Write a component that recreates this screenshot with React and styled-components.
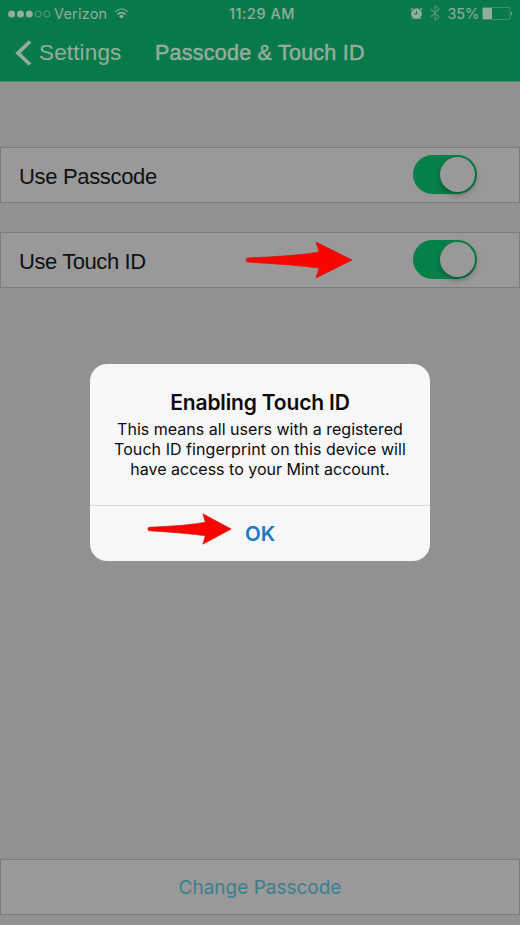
import React from "react";
import styled, { createGlobalStyle } from "styled-components";

const GlobalStyle = createGlobalStyle`
  *, *::before, *::after { box-sizing: border-box; }
  html, body { margin: 0; padding: 0; background: #929292; }
`;

const Screen = styled.main`
  position: relative;
  display: flex;
  flex-direction: column;
  width: 520px;
  height: 925px;
  overflow: hidden;
  background: #929292;
  font-family: "Inter", sans-serif;
`;

const Header = styled.header`
  height: 82px;
  background: #087a4a;
  color: #94ad9f;
  border-bottom: 1px solid #4d8a6d;
`;

const StatusBar = styled.div`
  display: grid;
  grid-template-columns: 1fr auto 1fr;
  align-items: center;
  height: 27px;
  padding: 0 7px 0 8px;
  font-size: 14.5px;
`;

const StatusGroup = styled.div`
  display: flex;
  align-items: center;
  justify-content: ${(p) => (p.$end ? "flex-end" : "flex-start")};
`;

const StatusText = styled.span`
  font-weight: ${(p) => p.$weight || 400};
  letter-spacing: ${(p) => p.$spacing || "0"};
  margin: ${(p) => p.$margin || "0"};
  line-height: 20px;
  white-space: nowrap;
`;

const Icon = styled.svg`
  display: block;
  flex: none;
  margin: ${(p) => p.$margin || "0"};
`;

const NavBar = styled.nav`
  display: flex;
  align-items: center;
  height: 52px;
  padding-left: 15px;
  font-family: "Liberation Sans", Arial, sans-serif;
  font-size: 22px;
`;

const BackButton = styled.button`
  display: flex;
  align-items: center;
  gap: 7px;
  width: 140px;
  padding: 0;
  border: 0;
  background: none;
  color: inherit;
  font: inherit;
  font-size: 22.5px;
  line-height: 28px;
  letter-spacing: 0.15px;
`;

const NavTitle = styled.h1`
  margin: 0;
  font-size: 21.5px;
  font-weight: 400;
  line-height: 28px;
  letter-spacing: 0.24px;
  white-space: nowrap;
  -webkit-text-stroke: 0.5px currentColor;
`;

const Content = styled.section`
  display: flex;
  flex: 1;
  flex-direction: column;
  gap: 29px;
  padding: 65px 0 10px;
`;

const Row = styled.div`
  display: flex;
  align-items: center;
  justify-content: space-between;
  height: 56px;
  flex: none;
  padding: 0 42px 0 18px;
  border: 1px solid #7b7b7b;
  background: #999;
  color: #101010;
  font-family: "Liberation Sans", Arial, sans-serif;
  font-size: 22px;
`;

const RowLabel = styled.span`
  line-height: 28px;
  padding-top: 4px;
  letter-spacing: ${(p) => p.$spacing || "0"};
`;

const Toggle = styled.span`
  display: flex;
  justify-content: flex-end;
  width: 64px;
  height: 39px;
  padding: 2px;
  margin-bottom: 1px;
  border-radius: 20px;
  background: #068049;
`;

const Knob = styled.span`
  width: 35px;
  height: 35px;
  border-radius: 50%;
  background: #999;
  box-shadow: 0 3px 6px rgba(0, 0, 0, 0.3);
`;

const ChangeButton = styled.button`
  height: 56px;
  margin-top: auto;
  padding: 2px 0 0;
  border: 1px solid #7b7b7b;
  background: #999;
  color: #3b7f8d;
  font: 400 19px/28px "Inter", sans-serif;
`;

const Dialog = styled.section`
  position: absolute;
  top: 364px;
  left: 90px;
  display: flex;
  flex-direction: column;
  width: 340px;
  height: 197px;
  border-radius: 17px;
  overflow: hidden;
  background: #f7f7f7;
  color: #0b0b0b;
  text-align: center;
`;

const DialogBody = styled.div`
  flex: 1;
  padding-top: 25px;
`;

const DialogTitle = styled.h2`
  margin: 0;
  font-size: 21px;
  font-weight: 600;
  line-height: 28px;
  letter-spacing: -0.16px;
`;

const Message = styled.p`
  margin: 2px 0 0;
  font-size: 16px;
  line-height: 20px;
  white-space: nowrap;
`;

const MessageLine = styled.span`
  display: block;
  letter-spacing: ${(p) => p.$spacing};
`;

const OkButton = styled.button`
  height: 56px;
  padding: 0;
  border: 0;
  border-top: 1px solid #dadada;
  background: none;
  color: #2078c5;
  font: 600 20.5px/28px "Inter", sans-serif;
`;

const ArrowShape = styled.svg`
  position: absolute;
  left: ${(p) => p.$left}px;
  top: ${(p) => p.$top}px;
`;

function Arrow({ left, top, width, height }) {
  return (
    <ArrowShape $left={left} $top={top} width={width} height={height} viewBox="0 0 108 38" preserveAspectRatio="none">
      <path d="M2 17 Q52 15 74 11 L71 1 L107 19 L71 37 L74 27 Q52 24 2 21 Q0 19 2 17Z" fill="#fb0400" stroke="#d51815" strokeWidth=".8" />
    </ArrowShape>
  );
}

export default function App() {
  return (
    <Screen>
      <GlobalStyle />
      <Header>
        <StatusBar>
          <StatusGroup>
            <Icon width="43" height="8" viewBox="0 0 43 8" fill="currentColor">
              <circle cx="3.6" cy="4" r="3.5" />
              <circle cx="12.5" cy="4" r="3.5" />
              <circle cx="21.3" cy="4" r="3.5" />
              <g fill="none" stroke="currentColor" strokeWidth=".6">
                <circle cx="30.1" cy="4" r="3.1" />
                <circle cx="38.8" cy="4" r="3.1" />
              </g>
            </Icon>
            <StatusText $margin="0 0 0 3px" $spacing=".2px">Verizon</StatusText>
            <Icon width="15" height="11" viewBox="0 0 15 11" $margin="0 0 1px 7px" fill="none" stroke="currentColor" strokeWidth="1.5">
              <path d="M1 4 Q7.5 -2 14 4" opacity=".65" />
              <path d="M3.4 6.5 Q7.5 2.7 11.6 6.5" />
              <path d="M5 8.2 Q7.5 6 10 8.2 L7.5 10.7Z" fill="currentColor" stroke="none" />
            </Icon>
          </StatusGroup>
          <StatusText $weight={500} $spacing=".5px" $margin="0 -3px 0 0">11:29 AM</StatusText>
          <StatusGroup $end>
            <Icon width="13" height="13" viewBox="0 0 13 13" $margin="0 0 1px">
              <circle cx="6.5" cy="6.7" r="5.4" fill="currentColor" />
              <path d="M.7 2.9 2.6 1.1M10.4 1.1l1.9 1.8M2.9 11.2l-.6.8M10.1 11.2l.6.8" stroke="currentColor" strokeWidth="1.3" />
              <path d="M6.5 3.7v3.3H4" fill="none" stroke="#087a4a" strokeWidth="1" />
            </Icon>
            <Icon width="10" height="16" viewBox="0 0 10 16" $margin="0 0 1px 7px" opacity=".55">
              <path d="M.7 4 9 11.8 5 15.2V.8l4 3.4L.7 12" fill="none" stroke="currentColor" strokeWidth="1.1" />
            </Icon>
            <StatusText $margin="0 3px 0 8px" $spacing="-.2px">35%</StatusText>
            <Icon width="31" height="13" viewBox="0 0 31 13" $margin="0 0 1px">
              <rect x=".5" y=".5" width="27.5" height="12" rx="1" fill="none" stroke="currentColor" strokeOpacity=".55" strokeWidth=".8" />
              <rect x="1" y="1" width="9" height="11" fill="currentColor" />
              <path d="M29 4.5q2 2 0 4Z" fill="currentColor" />
            </Icon>
          </StatusGroup>
        </StatusBar>
        <NavBar>
          <BackButton>
            <Icon width="17" height="26" viewBox="0 0 17 26">
              <path d="M15 1.5 3 13 15 24.5" fill="none" stroke="currentColor" strokeWidth="3.8" />
            </Icon>
            Settings
          </BackButton>
          <NavTitle>Passcode &amp; Touch ID</NavTitle>
        </NavBar>
      </Header>
      <Content>
        <Row>
          <RowLabel $spacing="-.33px">Use Passcode</RowLabel>
          <Toggle><Knob /></Toggle>
        </Row>
        <Row>
          <RowLabel $spacing="-.42px">Use Touch ID</RowLabel>
          <Toggle><Knob /></Toggle>
        </Row>
        <ChangeButton>Change Passcode</ChangeButton>
      </Content>
      <Dialog role="dialog">
        <DialogBody>
          <DialogTitle>Enabling Touch ID</DialogTitle>
          <Message>
            <MessageLine $spacing="0.02px">This means all users with a registered</MessageLine>
            <MessageLine $spacing="0.05px">Touch ID fingerprint on this device will</MessageLine>
            <MessageLine $spacing="0px">have access to your Mint account.</MessageLine>
          </Message>
        </DialogBody>
        <OkButton>OK</OkButton>
      </Dialog>
      <Arrow left={245} top={241} width={108} height={38} />
      <Arrow left={147} top={513} width={85} height={32} />
    </Screen>
  );
}
